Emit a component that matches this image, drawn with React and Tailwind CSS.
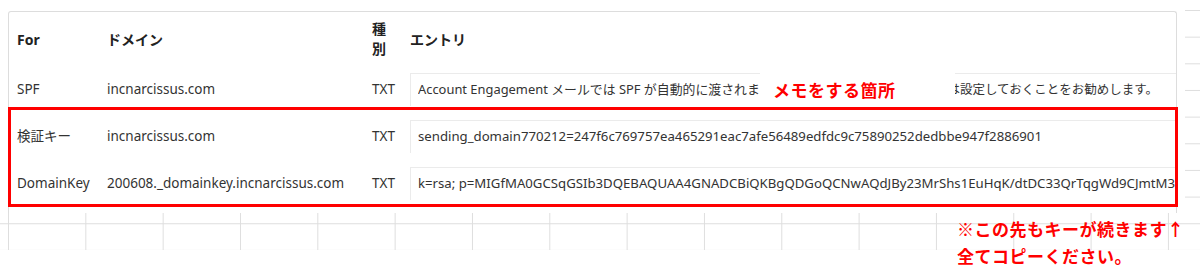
import React from "react";

const Row = ({ label, domain, children }) => (
  <div className="flex h-[47px] items-center">
    <div className="w-[90px] shrink-0">{label}</div>
    <div className="w-[265px] shrink-0">{domain}</div>
    <div className="w-[38px] shrink-0">TXT</div>
    <div className="flex h-[33px] min-w-0 flex-1 items-center overflow-hidden whitespace-nowrap border-l border-t border-[#ebebeb] px-[7px] text-[13.2px]">
      {children}
    </div>
  </div>
);

export default function App() {
  return (
    <div className="relative h-[273px] w-[1200px] overflow-hidden bg-white font-['Noto_Sans','Noto_Sans_CJK_JP',sans-serif] text-[13.5px] text-[#333333]">
      <div className="h-[250px] bg-[linear-gradient(to_right,#dedede_1px,transparent_1px),linear-gradient(to_bottom,#dedede_1px,transparent_1px)] bg-[size:77.33px_26.67px] bg-[position:8px_10px]">
        <div className="h-[213px] w-[1185px] overflow-hidden bg-white pl-[8px] pt-[11px]">
          <div className="h-[220px] w-[1169px] rounded-t-[3px] border-l border-r border-t border-[#dddddd] pl-[8px]">
            <div className="flex h-[54px] items-center text-[14px] font-bold text-[#222222]">
              <div className="w-[90px] shrink-0">For</div>
              <div className="w-[265px] shrink-0">ドメイン</div>
              <div className="w-[38px] shrink-0 leading-[20px]">
                種<br />別
              </div>
              <div>エントリ</div>
            </div>
            <Row label="SPF" domain="incnarcissus.com">
              <div className="flex w-full min-w-0 items-center">
                <span className="min-w-0 flex-1 overflow-hidden text-[12.9px]">
                  Account Engagement メールでは SPF が自動的に渡されますが、念のため SPF レコード
                </span>
                <span className="shrink-0 pr-[11px] text-[12.5px]">は設定しておくことをお勧めします。</span>
              </div>
            </Row>
            <Row label="検証キー" domain="incnarcissus.com">
              <span>sending_domain770212=247f6c769757ea465291eac7afe56489edfdc9c75890252dedbbe947f2886901</span>
            </Row>
            <Row label="DomainKey" domain="200608._domainkey.incnarcissus.com">
              <span>k=rsa; p=MIGfMA0GCSqGSIb3DQEBAQUAA4GNADCBiQKBgQDGoQCNwAQdJBy23MrShs1EuHqK/dtDC33QrTqgWd9CJmtM3CkPq8Yx2LwQ</span>
            </Row>
          </div>
        </div>
      </div>
      <div className="h-[23px] overflow-hidden pl-[85px] pt-[21px] text-[13px] text-[#aaaaaa]">
        設定の手順
      </div>

      {/* annotation: memo box */}
      <div className="absolute left-[760px] top-[73px] flex h-[33px] w-[195px] items-center bg-white pl-[13px] font-['Noto_Sans_CJK_JP',sans-serif] text-[17px] font-bold tracking-[0.5px] text-[#ff0000]">
        メモをする箇所
      </div>

      {/* annotation: red frame */}
      <div className="absolute left-[8px] top-[107px] h-[100px] w-[1170px] border-[3px] border-[#ff0000]" />

      {/* annotation: note */}
      <div className="absolute left-[957px] top-[215px] font-['Noto_Sans_CJK_JP',sans-serif] text-[17px] font-bold leading-[27px] tracking-[0.5px] text-[#ff0000]">
        <div>※この先もキーが続きます↑</div>
        <div>全てコピーください。</div>
      </div>
    </div>
  );
}
